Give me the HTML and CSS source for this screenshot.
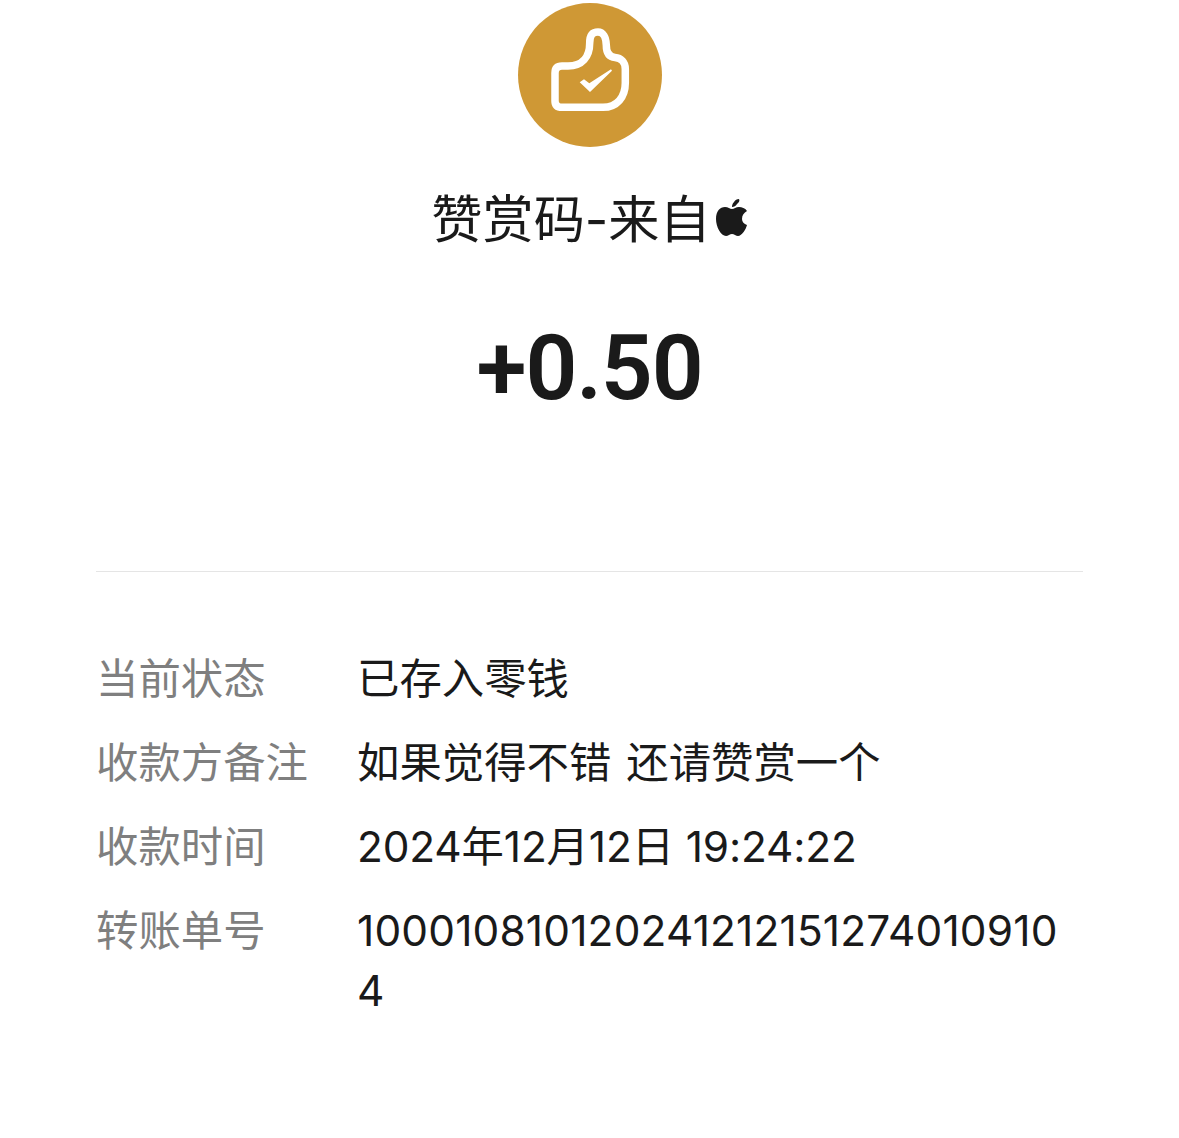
FILE: index.html
```html
<!DOCTYPE html>
<html lang="zh">
<head>
<meta charset="utf-8">
<title>赞赏码</title>
<link rel="stylesheet" href="styles.css">
</head>
<body>
<main class="page">
  <header class="head">
    <div class="badge">
      <svg class="thumb" viewBox="0 0 100 100" width="100" height="100" fill="none">
        <path stroke="#fff" stroke-width="7.5" stroke-linejoin="round" d="M22 82.3H63C77 82.3 85.3 72 85.3 58V44C85.3 37 81 33 75 32.5C69 32 66.3 28 66.3 20C66 12 63 7 58 7C52 7 49.7 11 49.7 18C49.7 32 42 41 28 41H22Q15 41 15 48V76Q15 82.3 22 82.3Z"/>
        <path fill="#fff" d="M44 54.3L49.3 58.3L71 44.3L72 45.7L50 67L39.7 57.3Z"/>
      </svg>
    </div>
    <h1 class="title">赞赏码-来自<svg class="apple" viewBox="0 0 32 38" width="32" height="38"><path fill="#1a1a1a" d="M26 20c0-4 2-6 5-8-2-3-5-4-8-4-3 0-5 2-7 2s-4-2-7-2C4 8 0 12 0 20c0 8 5 17 10 17 2 0 4-2 6-2s4 2 6 2c4 0 8-7 9-11-3-1-5-3-5-6zM21 5c2-2 3-3 2-5-2 0-4 1-5 3-2 2-2 4-2 5 2 0 4-1 5-3z"/></svg></h1>
    <div class="amount">+0.50</div>
  </header>
  <dl class="details">
    <div class="row"><dt>当前状态</dt><dd>已存入零钱</dd></div>
    <div class="row"><dt>收款方备注</dt><dd class="note">如果觉得不错 还请赞赏一个</dd></div>
    <div class="row"><dt>收款时间</dt><dd class="date">2024年12月12日 19:24:22</dd></div>
    <div class="row"><dt>转账单号</dt><dd class="long">1000108101202412121512740109104</dd></div>
  </dl>
</main>
</body>
</html>
```
FILE: styles.css
```css
* { box-sizing: border-box; }
html, body { margin: 0; padding: 0; background: #fff; }
body { font-family: Inter, "Noto Sans CJK SC", sans-serif; color: #1a1a1a; }
.page { width: 1179px; height: 1138px; padding: 3px 96px 0; overflow: hidden; }
.head { display: flex; flex-direction: column; align-items: center; border-bottom: 1px solid #e5e5e5; height: 569px; }
.badge { width: 144px; height: 144px; border-radius: 50%; background: #cf9835; display: flex; align-items: center; justify-content: center; }
.title { margin: 41px 0 0; font-size: 51.2px; line-height: 62px; font-weight: 400; display: flex; align-items: center; }
.apple { margin-left: 5px; margin-top: -3px; }
.amount { margin-top: 58px; font-family: Roboto, sans-serif; font-size: 91px; line-height: 120px; font-weight: 600; letter-spacing: -1.2px; }
.details { margin: 77px 0 0; font-size: 42.4px; line-height: 60px; }
.row { display: flex; margin-bottom: 24px; }
.row dt { width: 261px; flex: none; color: #7f7f7f; }
.row dd { margin: 0; flex: 1; min-width: 0; overflow-wrap: anywhere; }
.row .note { word-spacing: 3px; }
.row .date { letter-spacing: -0.15px; }
.row .long { padding-right: 15px; letter-spacing: 0.17px; }
```
